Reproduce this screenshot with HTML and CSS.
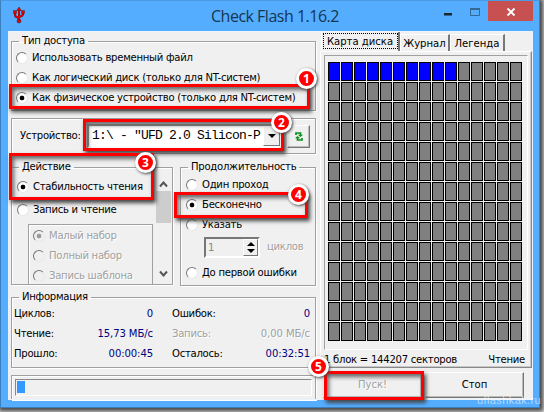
FILE: index.html
```html
<!DOCTYPE html>
<html lang="ru">
<head>
<meta charset="utf-8">
<title>Check Flash 1.16.2</title>
<link rel="stylesheet" href="styles.css">
</head>
<body>
<div class="window">
  <header class="titlebar">
    <svg class="usb" width="12" height="17" viewBox="0 0 12 17"><path d="M6 2v12M2 5v3q0 2 4 3M10 5v2q0 2-4 3" fill="none" stroke="#311" stroke-width="2"/><path d="M6 2v12M2 5v3q0 2 4 3M10 5v2q0 2-4 3" fill="none" stroke="#f00000" stroke-width="1.5"/><path d="M6 0l2.4 3.5H3.600zM.5 3.500h3v3h-3zM8.500 3.500h3v3h-3z" fill="#f00000" stroke="#222" stroke-width=".4"/><circle cx="6" cy="14" r="2" fill="#f00000" stroke="#222" stroke-width=".5"/></svg>
    <h1>Check Flash 1.16.2</h1>
    <svg class="controls" width="89" height="21" viewBox="0 0 89 21"><path d="M0 12h8v2.500H0z" fill="#1b2632"/><path d="M26.500 7.500h9v7h-9z" fill="none" stroke="#356892"/><path d="M26 7h10v2H26z" fill="#356892"/><path d="M44 0h45v20H44z" fill="#c75050"/><path d="M63.500 7.500l7 7M70.500 7.500l-7 7" stroke="#fff" stroke-width="1.900"/></svg>
  </header>
  <main class="client">
    <div class="left">
      <fieldset class="group access"><legend>Тип доступа</legend>
        <label class="opt"><i class="radio"></i><span>Использовать временный файл</span></label>
        <label class="opt"><i class="radio"></i><span>Как логический диск (только для NT-систем)</span></label>
        <label class="opt"><i class="radio on"></i><span>Как физическое устройство (только для NT-систем)</span></label>
      </fieldset>
      <div class="group device">
        <span class="devname">Устройство:</span>
        <div class="combo"><span>1:\ - "UFD 2.0 Silicon-P</span><b class="drop"></b></div>
        <div class="refresh"><svg width="8" height="11" viewBox="0 0 8 11"><path d="M1 4V2h4.500v2.500M7 7v2H2.500V6.500" fill="none" stroke="#089018" stroke-width="1.700"/><path d="M2.800 3.800H8L5.500 6zM0 7.200h5.200L2.500 5z" fill="#089018"/></svg></div>
      </div>
      <div class="pair">
        <fieldset class="group action"><legend>Действие</legend>
          <div class="scroll">
            <label class="opt"><i class="radio on"></i><span>Стабильность чтения</span></label>
            <label class="opt second"><i class="radio"></i><span>Запись и чтение</span></label>
            <div class="sub">
              <label class="opt off"><i class="radio on"></i><span>Малый набор</span></label>
              <label class="opt off"><i class="radio"></i><span>Полный набор</span></label>
              <label class="opt off"><i class="radio"></i><span>Запись шаблона</span></label>
            </div>
          </div>
          <div class="bar"><svg width="9" height="7" viewBox="0 0 9 7"><path d="M1 5.500l3.500-4L8 5.500" fill="none" stroke="#555" stroke-width="2"/></svg><i class="thumb"></i><svg width="9" height="7" viewBox="0 0 9 7"><path d="M1 1.500l3.500 4L8 1.500" fill="none" stroke="#555" stroke-width="2"/></svg></div>
        </fieldset>
        <fieldset class="group duration"><legend>Продолжительность</legend>
          <label class="opt"><i class="radio"></i><span>Один проход</span></label>
          <label class="opt"><i class="radio on"></i><span>Бесконечно</span></label>
          <label class="opt"><i class="radio"></i><span>Указать</span></label>
          <div class="cycles"><div class="spin"><span>1</span><b><i class="up"></i><i class="down"></i></b></div><span class="dim">циклов</span></div>
          <label class="opt"><i class="radio"></i><span>До первой ошибки</span></label>
        </fieldset>
      </div>
      <fieldset class="group info"><legend>Информация</legend>
        <dl>
          <dt>Циклов:</dt><dd>0</dd><dt>Ошибок:</dt><dd>0</dd>
          <dt>Чтение:</dt><dd>15,73 МБ/с</dd><dt class="dim">Запись:</dt><dd class="dim">0,00 МБ/с</dd>
          <dt>Прошло:</dt><dd>00:00:45</dd><dt>Осталось:</dt><dd>00:32:51</dd>
        </dl>
      </fieldset>
      <div class="group progress"><div class="track"><i></i></div></div>
    </div>
    <div class="right">
      <nav class="tabs"><span class="tab active">Карта диска</span><span class="tab journal">Журнал</span><span class="tab legend">Легенда</span></nav>
      <section class="page">
        <div class="map" id="map"></div>
        <p class="status"><span>1 блок = 144207 секторов</span><span>Чтение</span></p>
      </section>
      <div class="buttons"><div class="btn dim">Пуск!</div><div class="btn">Стоп</div></div>
    </div>
  </main>
</div>
<div class="mark m1"></div><div class="mark m2"></div><div class="mark m3"></div><div class="mark m4"></div><div class="mark m5"></div>
<b class="badge b1">1</b><b class="badge b2">2</b><b class="badge b3">3</b><b class="badge b4">4</b><b class="badge b5">5</b>
<span class="watermark">uflashkak.ru</span>
<script src="map.js"></script>
</body>
</html>
```
FILE: map.js
```js
const map = document.getElementById('map');
for (let n = 0; n < 15 * 14; n++) {
  const cell = document.createElement('i');
  if (n < 10) cell.className = 'read';
  map.append(cell);
}
```
FILE: styles.css
```css
* { box-sizing: border-box; }
body { margin: 0; width: 544px; height: 412px; overflow: hidden; position: relative; background: #d8d8d8; font: 11.2px/20px "DejaVu Sans Condensed", "DejaVu Sans", sans-serif; letter-spacing: -.26px; color: #000; }
.window { width: 540px; height: 408px; background: #54adff; border: 1px solid #3b7fbd; border-top-color: #4a99e0; box-shadow: 1px 1px 4px 2px #444; }
.titlebar { height: 30px; display: flex; align-items: flex-start; }
.usb { margin: 6px 0 0 12px; }
h1 { font: 16px/30px "Open Sans", sans-serif; letter-spacing: -.5px; color: #17354f; margin: 0 0 0 186px; width: 233px; white-space: nowrap; }
.client { margin-left: 7px; width: 525px; height: 369px; background: #f0f0f0; outline: 1px solid #eaf3fb; outline-offset: -1px; display: flex; }
.left { width: 305px; margin-left: 3px; }
.group { margin: 0; padding: 0; border: 1px solid #a0a0a0; box-shadow: 1px 1px #fff, inset 1px 1px #fff; min-width: 0; }
legend { margin-left: 7px; padding: 0 3px; height: 14px; line-height: 14px; white-space: nowrap; }
.opt { display: flex; align-items: center; height: 20px; gap: 4px; white-space: nowrap; }
.radio { width: 12px; height: 12px; border-radius: 50%; border: 1.500px solid; border-color: #777 #e8e8e8 #e8e8e8 #777; background: #fff; flex: none; }
.radio.on { background: radial-gradient(circle, #000 2px, #fff 2.700px); }
.off, .dim { color: #a0a0a0 !important; text-shadow: 1px 1px #fff; }
.off .radio { background: #f0f0f0; }
.off .radio.on { background: radial-gradient(circle, #999 2px, #f0f0f0 2.700px); }
.access { margin-top: 3px; height: 77px; }
.access .opt { padding-left: 4px; }
.device { margin-top: 7px; height: 36px; display: flex; align-items: center; padding-left: 8px; }
.devname { width: 67px; }
.combo { width: 195px; height: 24px; border: 2px solid; border-color: #777 #fff #fff #777; background: #fff; display: flex; font: 13px/20px "Liberation Mono", monospace; letter-spacing: -.8px; padding-left: 3px; }
.combo span { width: 171px; overflow: hidden; white-space: nowrap; }
.drop { width: 17px; height: 20px; flex: none; background: #f0f0f0; border: 1px solid; border-color: #fff #777 #777 #fff; display: grid; place-items: center; }
.drop::after, .spin i { content: ""; border: 4px solid transparent; border-top: 4px solid #000; border-bottom: 0; }
.refresh { width: 23px; height: 23px; margin-left: 5px; border: 1px solid; border-color: #fff #777 #777 #fff; box-shadow: inset -1px -1px #bbb; display: grid; place-items: center; }
.pair { display: flex; gap: 7px; margin-top: 6px; }
.action { width: 162px; height: 125px; display: block; }
.scroll { width: 144px; float: left; height: 110px; overflow: hidden; padding: 3px 0 0 5px; }
.scroll .second { margin-top: 3px; }
.sub { margin: 4px 0 0 11px; width: 125px; height: 80px; border: 1px solid #a0a0a0; box-shadow: inset 1px 1px #fff; padding: 1px 0 0 4px; }
.bar { float: left; width: 15px; height: 110px; display: flex; flex-direction: column; align-items: center; padding-top: 7px; }
.thumb { width: 15px; height: 32px; margin: 3px 0 47px; background: #cdcdcd; }
.bar svg { flex: none; }
.duration { width: 136px; height: 126px; }
.duration .opt { padding-left: 5px; }
.duration legend + .opt { margin-top: 1px; }
.cycles { display: flex; height: 28px; padding: 2px 0 0 23px; gap: 7px; align-items: flex-start; }
.spin { width: 56px; height: 21px; border: 2px solid; border-color: #777 #fff #fff #777; display: flex; justify-content: space-between; line-height: 17px; color: #888; padding-left: 2px; }
.spin b { width: 15px; display: flex; flex-direction: column; align-items: center; justify-content: space-evenly; border: 1px solid; border-color: #fff #777 #777 #fff; }
.spin .up { transform: rotate(180deg); }
.info { margin-top: 4px; height: 78px; }
dl { margin: 0; display: grid; grid-template-columns: 55px 84px 73px 84px; grid-auto-rows: 20px; padding-left: 2px; }
dt:nth-of-type(even) { padding-left: 19px; }
dt { white-space: nowrap; } dd { margin: 0; text-align: right; color: #000080; letter-spacing: -.1px; }
.progress { margin-top: 7px; height: 25px; padding: 3px; }
.track { height: 17px; border: 1px solid; border-color: #888 #fff #fff #888; padding: 1px; }
.track i { display: block; width: 8px; height: 12px; background: #3399ff; }
.right { width: 213px; margin-left: 4px; }
.tabs { height: 20px; display: flex; align-items: flex-end; margin-left: 1px; letter-spacing: 0; }
.tab { height: 17px; line-height: 17px; text-align: center; border-right: 2px solid #777; border-top: 1px solid #fff; border-left: 1px solid #fff; white-space: nowrap; }
.active { width: 79px; height: 20px; padding: 1px; line-height: 17px; outline: 1px dotted #000; outline-offset: -3px; }
.journal { width: 50px; } .legend { width: 55px; }
.page { height: 317px; border: 1px solid; border-color: #fff #888 #888 #fff; padding: 3px 3px 0; box-shadow: inset -1px -1px #c8c8c8; width: 212px; }
.map { height: 295px; width: 204px; border: 1px solid; border-color: #a0a0a0 #fff #fff #a0a0a0; padding: 6px 0 0 3px; display: grid; grid-template-columns: repeat(15, 12px); grid-auto-rows: 19px; gap: 1px; align-content: start; }
.map i { background: #808080; border: 1px solid #000; }
.map .read { background: #0000ff; }
.status { margin: 0; display: flex; justify-content: space-between; height: 17px; line-height: 19px; padding: 0 3px 0 0; }
.buttons { display: flex; gap: 3px; margin: 4px 0 0 3px; }
.btn { width: 99px; height: 26px; line-height: 24px; text-align: center; border: 1px solid; border-color: #fff #777 #777 #fff; box-shadow: inset -1px -1px #bbb; letter-spacing: 0; }
.mark { position: absolute; border: 3px solid #f00; box-shadow: 2px 3px 4px #444, inset 2px 3px 4px #666; }
.m1 { left: 9px; top: 84px; width: 301px; height: 25px; }
.m2 { left: 83px; top: 119px; width: 201px; height: 32px; }
.m3 { left: 9px; top: 153px; width: 145px; height: 47px; }
.m4 { left: 174px; top: 192px; width: 134px; height: 26px; }
.m5 { left: 324px; top: 371px; width: 100px; height: 29px; }
.badge { position: absolute; width: 21px; height: 21px; border-radius: 50%; border: 3px solid #fff; background: #f00; color: #fff; font: bold 12px/15px "Noto Sans", sans-serif; letter-spacing: 0; text-align: center; box-shadow: 1px 1px 3px #444; }
.b1 { left: 296px; top: 68px; } .b2 { left: 271px; top: 112px; } .b3 { left: 135px; top: 152px; } .b4 { left: 288px; top: 184px; } .b5 { left: 308px; top: 356px; }
.watermark { position: absolute; left: 477px; top: 391px; font: 11px/18px "Liberation Sans", sans-serif; color: #ffffff90; letter-spacing: .4px; }
```
